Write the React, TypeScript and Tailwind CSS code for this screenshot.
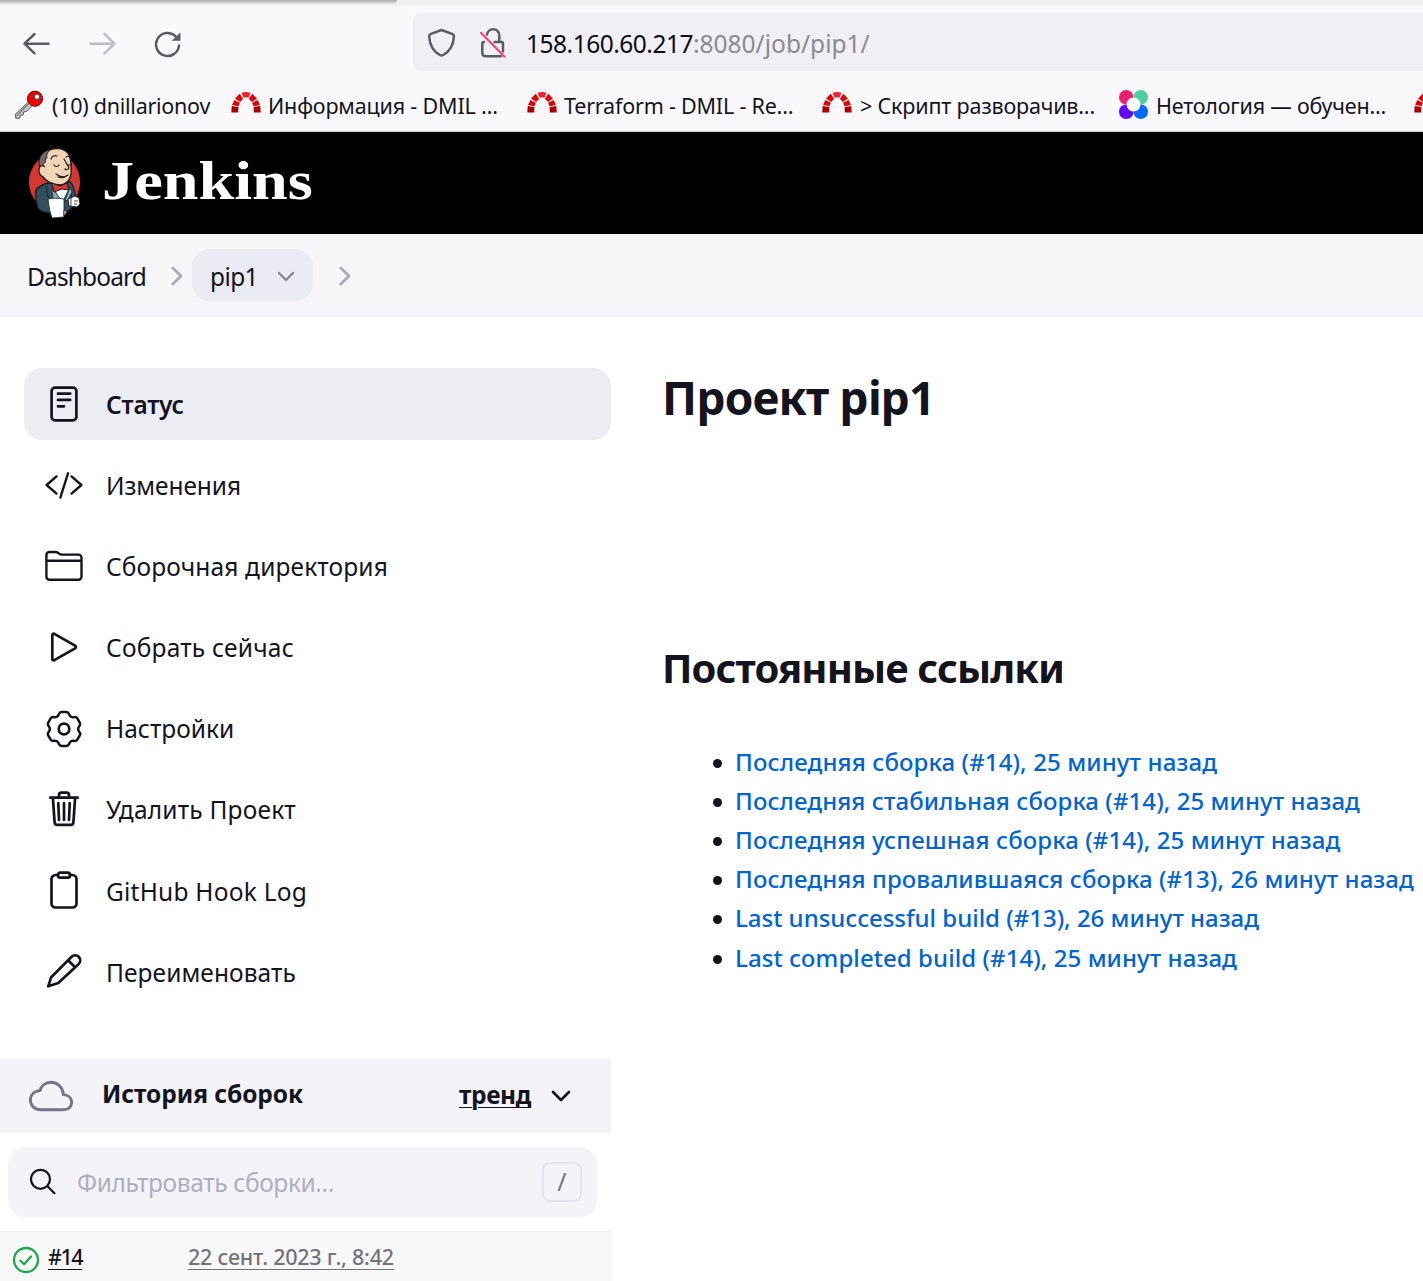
import React from "react";

/* Six-toothed cog outline centred on (21, 21) with softened corners. */
function cogPath() {
  const tooth = [[-5.9, -12.9], [-4.3, -16.900], [4.3, -16.900], [5.9, -12.9]];
  const pts: number[][] = [];
  for (let k = 0; k < 6; k++) {
    const a = (k * Math.PI) / 3;
    for (const [x, y] of tooth) {
      pts.push([21 + x * Math.cos(a) - y * Math.sin(a), 21 + x * Math.sin(a) + y * Math.cos(a)]);
    }
  }
  const n = pts.length;
  const toward = (p: number[], q: number[]) => {
    const d = Math.hypot(q[0] - p[0], q[1] - p[1]);
    const r = Math.min(2, d / 2) / d;
    return `${(p[0] + (q[0] - p[0]) * r).toFixed(2)} ${(p[1] + (q[1] - p[1]) * r).toFixed(2)}`;
  };
  return (
    pts
      .map((p, i) => `${i ? "L" : "M"}${toward(p, pts[(i + n - 1) % n])}Q${p[0].toFixed(2)} ${p[1].toFixed(2)} ${toward(p, pts[(i + 1) % n])}`)
      .join("") + "Z"
  );
}

function Line({ children }: { children: React.ReactNode }) {
  return (
    <svg viewBox="0 0 42 42" className="h-[42px] w-[42px] shrink-0" fill="none" stroke="#14141f" strokeWidth="2.7" strokeLinecap="round" strokeLinejoin="round">
      {children}
    </svg>
  );
}

const sidebar = [
  {
    label: "Статус",
    text: "font-semibold tracking-[-0.16px]",
    icon: (
      <Line>
        <rect x="8.6" y="4.6" width="24.8" height="32.8" rx="3.5" />
        <path d="M15 10.7h12.2M15 16.9h12.2M15 23.3h6" />
      </Line>
    ),
  },
  {
    label: "Изменения",
    text: "tracking-[-0.08px]",
    icon: (
      <Line>
        <path d="M13.5 12.4L3.6 21l9.9 8.6M28.5 12.4l9.9 8.6-9.9 8.6M25 9.3l-7.6 24.2" strokeWidth="2.4" />
      </Line>
    ),
  },
  {
    label: "Сборочная директория",
    text: "tracking-[0.145px]",
    icon: (
      <Line>
        <path d="M3.4 15.7V10a3 3 0 013-3h6.2c1 0 1.6.3 2.3.8l1.5 1.1c.7.5 1.3.7 2.2.7H35.5a3 3 0 013 3v19.2a3 3 0 01-3 3H6.4a3 3 0 01-3-3V15.7h35.1" strokeWidth="2.4" />
      </Line>
    ),
  },
  {
    label: "Собрать сейчас",
    text: "tracking-[0.22px]",
    icon: (
      <Line>
        <path d="M9.3 9v24c0 1.1 1 1.7 2 1.2l20.8-11.9c1-.6 1-2 0-2.6L11.3 7.8c-1-.5-2 .1-2 1.2z" />
      </Line>
    ),
  },
  {
    label: "Настройки",
    text: "",
    icon: (
      <Line>
        <path d={cogPath()} strokeWidth="2.5" />
        <circle cx="21" cy="21" r="5.3" />
      </Line>
    ),
  },
  {
    label: "Удалить Проект",
    text: "tracking-[0.2px]",
    icon: (
      <Line>
        <path d="M7.3 8.7h27.4M9.9 9l1.7 24.4a2.7 2.7 0 002.7 2.5h13.4a2.7 2.7 0 002.7-2.5L32.1 9M16 8.5V6a2.3 2.3 0 012.3-2.3h5.4A2.3 2.3 0 0126 6v2.5M21 14v17M15.3 14l.7 17M26.7 14l-.7 17" />
      </Line>
    ),
  },
  {
    label: "GitHub Hook Log",
    text: "tracking-[0.22px]",
    icon: (
      <Line>
        <path d="M15 5h-2.5a4 4 0 00-4 4v24.5a4 4 0 004 4h17a4 4 0 004-4V9a4 4 0 00-4-4H27" />
        <rect x="15" y="2.6" width="12" height="5" rx="2.2" />
      </Line>
    ),
  },
  {
    label: "Переименовать",
    text: "tracking-[0.08px]",
    icon: (
      <Line>
        <path d="M5.2 35.3l3-9.1L28.6 5.8a5 5 0 017.1 7.1L15.300 32z M25.300 9.500l6.800 6.800" />
      </Line>
    ),
  },
];

const links = [
  ["Последняя сборка (#14), 25 минут назад", "tracking-[0.12px]"],
  ["Последняя стабильная сборка (#14), 25 минут назад", "tracking-[0.078px]"],
  ["Последняя успешная сборка (#14), 25 минут назад", "tracking-[0.1px]"],
  ["Последняя провалившаяся сборка (#13), 26 минут назад", "tracking-[0.096px]"],
  ["Last unsuccessful build (#13), 26 минут назад", "tracking-[-0.01px]"],
  ["Last completed build (#14), 25 минут назад", "tracking-[0.07px]"],
];

function Arch() {
  return (
    <svg viewBox="0 0 30 30" className="h-[30px] w-[30px] shrink-0">
      <path d="M.3 22.500l.4-6.500 6.700.9-.2 5.600z" fill="#a80000" />
      <path d="M29.700 22.500l-.4-6.500-6.700.9.2 5.600z" fill="#a80000" />
      <path d="M1.100 14.900l2.200-5 5.600 2.900-1.500 3.500z" fill="#dc0000" />
      <path d="M28.900 14.900l-2.200-5-5.600 2.900 1.500 3.500z" fill="#dc0000" />
      <path d="M4.100 8.600l4.600-4.800 3.400 5-3 3.300z" fill="#e60000" />
      <path d="M25.900 8.600l-4.600-4.800-3.400 5 3 3.300z" fill="#e60000" />
      <path d="M10.500 2.800q4.500-1.400 9 0l-2 4.700h-5z" fill="#f02030" />
    </svg>
  );
}

function KeyIcon() {
  return (
    <svg viewBox="0 0 30 30" className="h-[30px] w-[30px] shrink-0">
      <path d="M15 11.500L1.500 24l.3 4.200h4l.3-2.700 3-.5.4-3 3-.6 5.800-6z" fill="#c9c9c9" stroke="#555" strokeWidth="1" />
      <path d="M15 13.500L3 25.500" stroke="#777" strokeWidth="1.2" />
      <circle cx="21" cy="8.700" r="7.600" fill="#f00000" stroke="#7a0a0a" strokeWidth="1" />
      <circle cx="23" cy="6.800" r="2.600" fill="#fff" stroke="#555" strokeWidth="1.2" />
    </svg>
  );
}

function Butler() {
  return (
    <svg viewBox="0 0 70 85" className="-mt-0.5 h-[85px] w-[70px] shrink-0" strokeLinejoin="round">
      <ellipse cx="34.5" cy="42" rx="25.5" ry="28" fill="#d33833" />
      <path d="M16 50c3-4 8-6 12-7l22-1c3 2 5 10 6 17-1 6-5 12-11 13l-5 3-16-3c-3-1-5-2-6-4-2-7-3-13-2-18z" fill="#335061" stroke="#1a1f22" strokeWidth="1.4" />
      <path d="M27 46c-1 6 0 10 3 14M50 47l2 12" fill="none" stroke="#1a1f22" strokeWidth="1" />
      <path d="M33 47l9 15 7-14z" fill="#fff" />
      <path d="M32 48l10 13 0 3-9-4zM50 47l-5 14 3-1 4-8z" fill="#81b0c4" stroke="#222" strokeWidth=".7" />
      <path d="M20 27c-1-11 6-18 16-18.500C48 8 51 16 51 27c1 9-1 16-10 18-8 0-14-3-18-8z" fill="#f0d6b7" stroke="#1f1c1b" strokeWidth="1.4" />
      <path d="M20 28c-3-9 1-16 10-18.500-2 3-4 5-3 8-2 1-1 5-3 6z" fill="#6d6b6d" stroke="#1f1c1b" strokeWidth="1" />
      <path d="M25 27c-6-5-9 6-2 10" fill="#f0d6b7" stroke="#1f1c1b" strokeWidth="1.3" />
      <path d="M34 25c1 2 4 2 5 0M47 24c1 1.500 3 1.500 4 0M44 19l5 9c-1 2-3 2-4 1M36 34c4 3 8 4 12 1M38 37c3 1 5 1 7 0M31 19c1-3 4-4 6-3M46 17c1-1 3-1 4 0" fill="none" stroke="#1f1c1b" strokeWidth="1.2" strokeLinecap="round" />
      <path d="M32 43l8 3 7-3 2 7-7-1-8 3z" fill="#d33833" stroke="#1f1c1b" strokeWidth="1" />
      <path d="M28 59c5-1 10-1 16 0l0 18-12 1c-2-5-3-12-4-19z" fill="#fff" stroke="#222" strokeWidth=".8" />
      <path d="M48 59l7-3 4 2 1 6-3 3-8-1zM44 70l3 2-3 4z" fill="#fff" stroke="#222" strokeWidth="1" />
      <path d="M51 58l0 8M54 61h4M54 64h3" stroke="#333" strokeWidth=".9" />
    </svg>
  );
}

function Chevron({ className }: { className: string }) {
  return (
    <svg viewBox="0 0 12 20" className={className} fill="none" stroke="#a9a9b8" strokeWidth="2.8" strokeLinecap="round" strokeLinejoin="round">
      <path d="M1.800 2l8.200 8-8.200 8" />
    </svg>
  );
}

export default function App() {
  return (
    <div className="flex h-[1281px] w-[1423px] flex-col overflow-hidden whitespace-nowrap bg-white font-['Noto_Sans',sans-serif] text-[24.5px] leading-none text-[#14141f]">
      <div className="flex h-1.5 shrink-0 bg-[#f0f0f0]">
        <div className="h-1 w-[397px] rounded-br-sm bg-linear-to-b from-[#a8a8a8] to-[#e6e6e6]" />
      </div>
      <div className="flex h-[126px] shrink-0 flex-col border-b border-[#cccccc] bg-[#f9f9fb]">
        <div className="flex h-[76px] items-start pt-[7px]">
          <svg viewBox="0 0 200 40" className="mt-[11px] h-10 w-[200px] shrink-0" fill="none" strokeWidth="2.5" strokeLinecap="round" strokeLinejoin="round">
            <path d="M48.500 19.700H24.500M34.500 10L24.500 19.700l10 9.700" stroke="#5b5b66" />
            <path d="M90.500 19.700h24M104.500 10l10 9.700-10 9.700" stroke="#bdbdc2" />
            <path d="M179 21.500a11.500 11.500 0 11-3.400-9.200" stroke="#5b5b66" />
            <path d="M180.500 8.500v8.300h-8.800z" fill="#5b5b66" stroke="none" />
          </svg>
          <div className="ml-[213px] flex h-[58px] flex-1 items-center rounded-l-lg bg-[#f0f0f4]">
            <svg viewBox="0 0 110 40" className="mt-1 h-10 w-[110px] shrink-0" fill="none" stroke="#5b5b66" strokeWidth="2.5" strokeLinecap="round" strokeLinejoin="round">
              <path d="M28.500 6l11.200 4.200c.9.300 1.300 1 1.200 2-.3 8.500-3.700 14.800-10.700 18.800-1.100.7-2.200.7-3.300 0-7-4-10.400-10.300-10.700-18.800-.1-1 .3-1.700 1.200-2z" />
              <path d="M74 10.500a6.200 6.200 0 0112.300.5v7M71 18h-.2a1.500 1.500 0 00-1.500 1.500v9.700a3 3 0 003 3h15.500M81.500 18h7a1.500 1.500 0 011.500 1.500v8" />
              <path d="M68 8.800l23.500 24" stroke="#ff3b6b" strokeWidth="2" />
            </svg>
            <span className="ml-[3px] mt-1 tracking-[-0.49px] text-[#0c0c14]">158.160.60.217</span>
            <span className="mt-1 text-[#8a8a92]">:8080/job/pip1/</span>
          </div>
        </div>
        <div className="flex h-[46px] items-center pl-3.5 text-[21.5px]">
          <div className="flex w-[217px] shrink-0 items-center gap-2"><KeyIcon /><span className="mt-0.5 tracking-[-0.26px]">(10) dnillarionov</span></div>
          <div className="flex w-[296px] shrink-0 items-center gap-[7px]"><Arch /><span className="mt-0.5 tracking-[-0.16px]">Информация - DMIL ...</span></div>
          <div className="flex w-[295px] shrink-0 items-center gap-[7px]"><Arch /><span className="mt-0.5 tracking-[-0.2px]">Terraform - DMIL - Re...</span></div>
          <div className="flex w-[297px] shrink-0 items-center gap-2"><Arch /><span className="mt-0.5 tracking-[-0.18px]">&gt; Скрипт разворачив...</span></div>
          <div className="flex w-[295px] shrink-0 items-center gap-2">
            <svg viewBox="0 0 30 30" className="-mt-0.5 h-[29px] w-[29px] shrink-0">
              <circle cx="7.500" cy="7.500" r="7.500" fill="#ed1e6e" />
              <circle cx="22.500" cy="7.500" r="7.500" fill="#4dd09d" />
              <circle cx="7.500" cy="22.500" r="7.500" fill="#6400fa" />
              <circle cx="22.500" cy="22.500" r="7.500" fill="#0069ff" />
              <circle cx="15" cy="15" r="7.200" fill="#fff" />
            </svg>
            <span className="mt-0.5 tracking-[-0.2px]">Нетология — обучен...</span>
          </div>
          <Arch />
        </div>
      </div>

      <header className="flex h-[102px] shrink-0 items-center bg-black pl-5">
        <Butler />
        <span className="-mt-1 ml-3 origin-left scale-x-[1.19] font-['Liberation_Serif',serif] text-[54px] font-bold text-white">Jenkins</span>
      </header>

      <nav className="flex h-[83px] shrink-0 items-center bg-[#f6f6f9] pb-px pl-[27px]">
        <span className="mt-1 w-[144px] tracking-[-0.87px]">Dashboard</span>
        <Chevron className="mt-0.5 h-5 w-3" />
        <div className="ml-[9px] flex h-[52px] w-[121px] items-center rounded-[18px] bg-[#eaebf3] pl-[18px]">
          <span className="mt-1 tracking-[-0.62px]">pip1</span>
          <svg viewBox="0 0 18 12" className="ml-auto mr-[18px] mt-1 h-3 w-[18px]" fill="none" stroke="#83838f" strokeWidth="2.3" strokeLinecap="round" strokeLinejoin="round"><path d="M2 2l7 7 7-7" /></svg>
        </div>
        <Chevron className="ml-[26px] mt-0.5 h-5 w-3" />
      </nav>

      <div className="flex flex-1">
        <aside className="flex w-[611px] shrink-0 flex-col pt-[51px]">
          <div className="flex flex-col gap-[9.15px] pl-6">
            {sidebar.map((s, i) => (
              <div key={s.label} className={i === 0 ? "flex h-[72px] items-center gap-[21px] rounded-[18px] bg-[#ecedf3] pl-[19px]" : "flex h-[72px] items-center gap-[21px] pl-[19px]"}>
                {s.icon}
                <span className="mt-0.5"><span className={s.text}>{s.label}</span></span>
              </div>
            ))}
          </div>
          <div className="mt-[50px] flex h-[75px] items-center bg-[#f3f3f8] pl-[29px]">
            <svg viewBox="0 0 512 512" className="mt-0.5 h-11 w-11" fill="none" stroke="#73738c" strokeWidth="34" strokeLinejoin="round"><path d="M400 240c-8.890-89.540-71-144-144-144-69 0-113.440 48.200-128 96-60 6-112 43.590-112 112 0 66 54 112 120 112h260c55 0 100-27.440 100-88 0-59.820-53-85.760-96-88z" /></svg>
            <span className="-mt-0.5 ml-[29px] font-bold tracking-[-0.08px]">История сборок</span>
            <span className="ml-auto font-bold tracking-[-0.38px] underline decoration-1 underline-offset-[3px]">тренд</span>
            <svg viewBox="0 0 20 12" className="ml-5 mr-10 mt-px h-3 w-5" fill="none" stroke="#14141f" strokeWidth="2.6" strokeLinecap="round" strokeLinejoin="round"><path d="M2 2l8 8 8-8" /></svg>
          </div>
          <div className="ml-2 mt-3.5 flex h-[70px] w-[589px] items-center rounded-[18px] bg-[#f3f3f8] pl-5">
            <svg viewBox="0 0 30 30" className="h-[30px] w-[30px]" fill="none" stroke="#14141f" strokeWidth="2.2" strokeLinecap="round"><circle cx="12.500" cy="12.300" r="9.500" /><path d="M19.500 19.300l7 7" /></svg>
            <span className="ml-[19px] mt-0.5 tracking-[-0.37px] text-[#aeaec0]">Фильтровать сборки...</span>
            <span className="ml-auto mr-[15px] flex h-10 w-10 items-center justify-center rounded-lg border-2 border-[#e4e4ee] text-[25px] text-[#73738c]">/</span>
          </div>
          <div className="mt-3.5 flex h-[50px] items-center border-t border-[#f0f0f2] bg-[#f8f8f8] pl-3 text-[21.5px] font-medium">
            <svg viewBox="0 0 28 28" className="mt-[7px] h-7 w-7" fill="none" stroke="#1ea64b" strokeWidth="2.3" strokeLinecap="round" strokeLinejoin="round"><circle cx="14" cy="14" r="12" /><path d="M8.500 14.800l3.600 3.500L19 10.500" /></svg>
            <span className="ml-2 w-[140px]"><span className="tracking-[-1.5px] underline decoration-1 underline-offset-4">#14</span></span>
            <span className="tracking-[-0.22px] text-[#73737a] underline decoration-1 underline-offset-4">22 сент. 2023 г., 8:42</span>
          </div>
        </aside>

        <main className="flex flex-col pl-[52px]">
          <h1 className="-ml-px mt-14 text-[46px] font-bold leading-[48px] tracking-[-0.8px]">Проект pip1</h1>
          <h2 className="-ml-px mt-[225px] text-[40px] font-bold leading-[44px] tracking-[-0.9px]">Постоянные ссылки</h2>
          <ul className="mt-[52px] flex flex-col text-[24px]">
            {links.map(([label, tracking]) => (
              <li key={label} className="flex h-[39.2px] items-center pl-[50px]">
                <span className="mr-[13px] mt-[3px] h-[9px] w-[9px] rounded-full bg-[#14141f]" />
                <a className="font-medium text-[#0063d3]"><span className={tracking}>{label}</span></a>
              </li>
            ))}
          </ul>
        </main>
      </div>
    </div>
  );
}
